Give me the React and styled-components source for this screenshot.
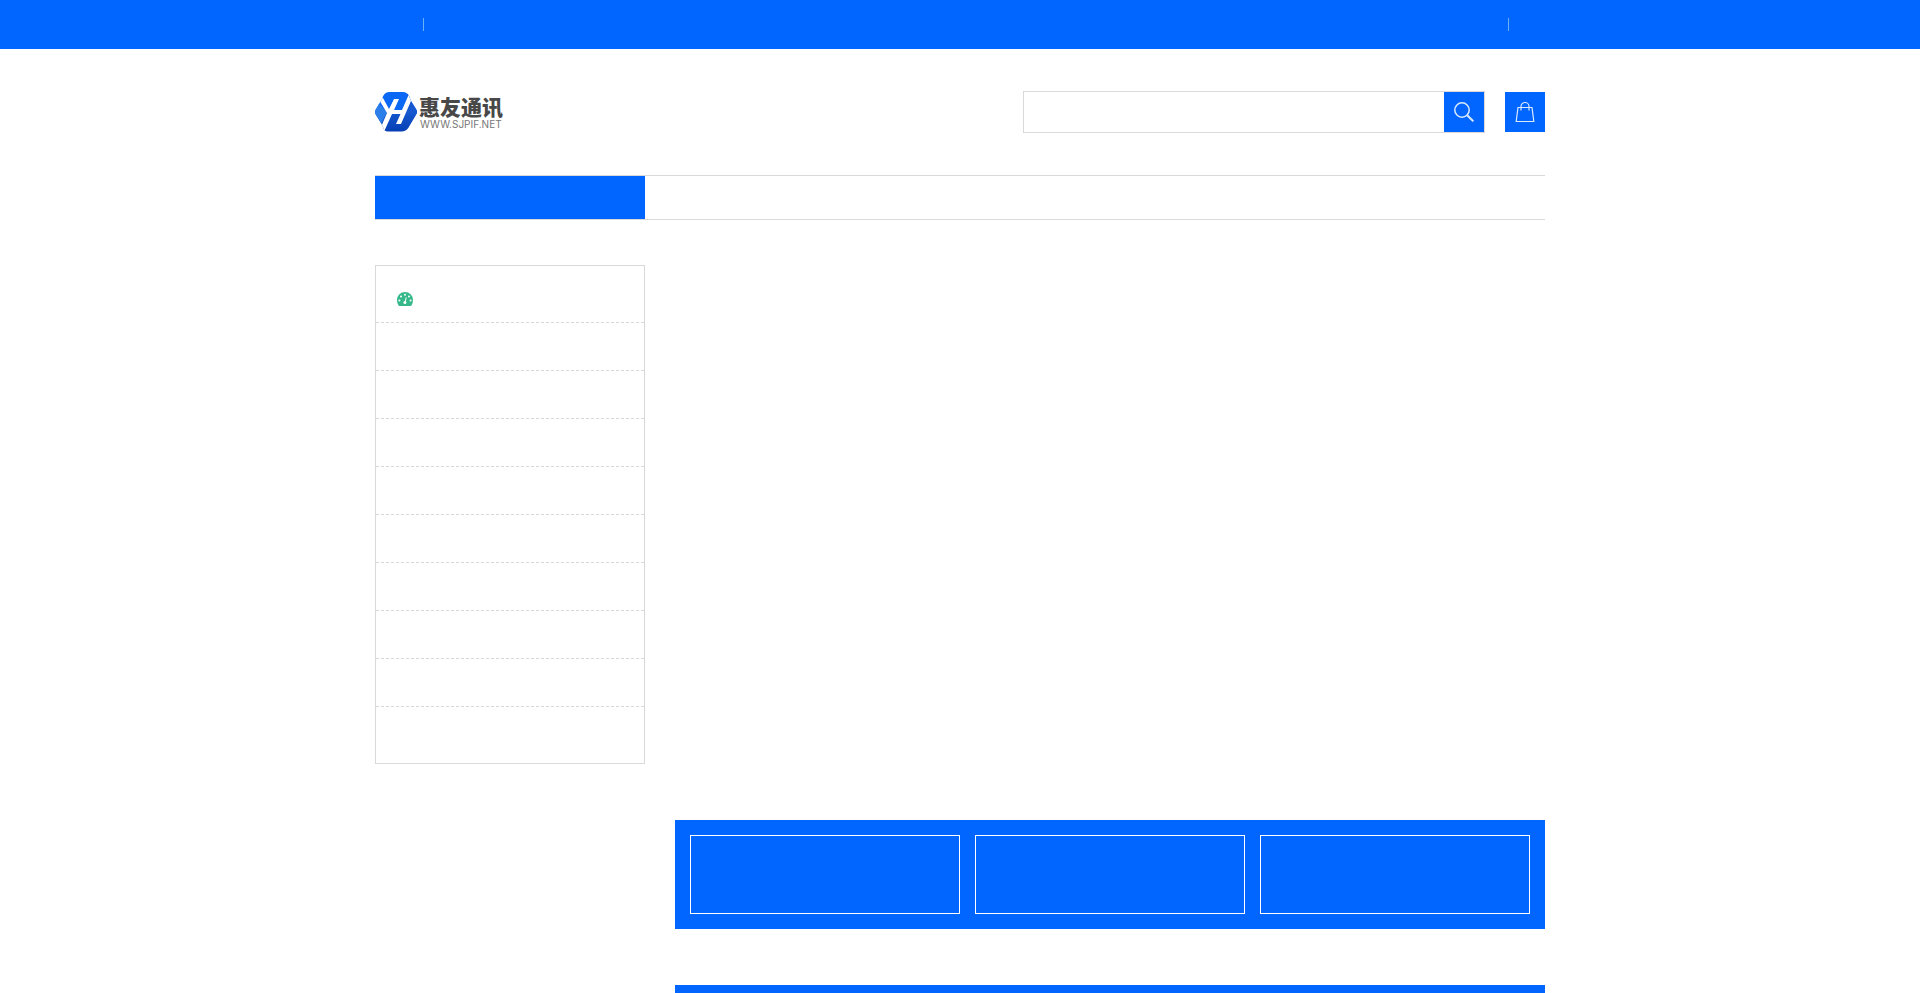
import React from "react";
import styled, { createGlobalStyle } from "styled-components";

const blue = "#0066ff";
const line = "#d9d9d9";

const GlobalStyle = createGlobalStyle`
  * { box-sizing: border-box; }
  body {
    margin: 0;
    background: #fff;
    font-family: "Liberation Sans", "Noto Sans CJK SC", sans-serif;
  }
`;

const Page = styled.div`
  min-height: 100vh;
`;

const Container = styled.div`
  width: 100%;
  max-width: 1170px;
  margin: 0 auto;
`;

const TopBar = styled.div`
  background: ${blue};
  padding: 18px 0;
`;

const TopBarInner = styled(Container)`
  display: flex;
  justify-content: space-between;
  padding: 0 36px 0 48px;
`;

const Separator = styled.span`
  width: 1px;
  height: 13px;
  background: #66b2f4;
`;

const Header = styled(Container)`
  display: flex;
  align-items: center;
  justify-content: space-between;
  padding: 42px 0;
`;

const Logo = styled.a`
  display: flex;
  align-items: flex-start;
  gap: 2px;
  color: #484848;
  text-decoration: none;
`;

const LogoText = styled.span`
  display: flex;
  flex-direction: column;
  padding-top: 2px;
`;

const LogoName = styled.span`
  font: 900 21px/24px "Noto Sans CJK SC", sans-serif;
`;

const LogoSite = styled.span`
  padding-left: 1px;
  font: 10px/12px Inter, sans-serif;
  color: #777;
`;

const Tools = styled.div`
  display: flex;
  align-items: center;
  gap: 20px;
`;

const SearchForm = styled.form`
  display: flex;
  width: 462px;
  height: 42px;
  border: 1px solid ${line};
`;

const SearchInput = styled.input`
  flex: 1;
  min-width: 0;
  border: 0;
  padding: 0 12px;
  font-size: 14px;
  background: transparent;
  outline: none;
`;

const IconButton = styled.button`
  display: flex;
  align-items: center;
  justify-content: center;
  width: 40px;
  height: 40px;
  padding: 0;
  border: 0;
  color: #d9eaff;
  background: ${blue};
  cursor: pointer;
`;

const Nav = styled(Container)`
  border: solid ${line};
  border-width: 1px 0;
`;

const CategoryButton = styled.button`
  display: block;
  width: 270px;
  height: 43px;
  border: 0;
  background: ${blue};
`;

const Main = styled(Container)`
  display: flex;
  align-items: flex-start;
  gap: 30px;
  padding-top: 45px;
`;

const Sidebar = styled.ul`
  flex: none;
  width: 270px;
  margin: 0;
  padding: 9px 0;
  border: 1px solid ${line};
  list-style: none;
`;

const SidebarItem = styled.li`
  display: flex;
  align-items: center;
  height: 48px;
  padding: 0 21px;
  border-bottom: 1px dashed ${line};
  color: #36b88b;

  &:last-child {
    height: 47px;
    border-bottom: 0;
  }
`;

const Content = styled.div`
  flex: 1;
  min-width: 0;
`;

const Slider = styled.section`
  height: 499px;
`;

const Banner = styled.section`
  display: grid;
  grid-template-columns: repeat(3, 1fr);
  gap: 15px;
  margin-top: 56px;
  padding: 15px;
  background: ${blue};
`;

const BannerCard = styled.div`
  height: 79px;
  border: 1px solid #fff;
`;

const LogoMark = () => (
  <svg width="42" height="40" viewBox="0 0 42 40" aria-hidden="true">
    <defs>
      <clipPath id="mark-shape">
        <path d="M14 0H28Q32 0 34 4L36 9L41 17Q43 20 41 23L35 33Q32 39.500 27 39.500H13Q9 39.500 8 35L6 31L1 23Q-1 20 1 17L7 7Q9 0 14 0Z" />
      </clipPath>
      <linearGradient id="mark-low" x1="0" y1="0" x2="0" y2="1">
        <stop offset="0" stopColor="#1558cf" />
        <stop offset="1" stopColor="#063eb4" />
      </linearGradient>
    </defs>
    <g clipPath="url(#mark-shape)">
      <rect width="42" height="20" fill="#0a68f5" />
      <rect y="20" width="42" height="20" fill="url(#mark-low)" />
      <path d="M0 8L12 20L5 34L0 34Z" fill="#2c7fe8" />
      <path d="M33 0L42 0V22L30 22Z" fill="#1558cf" />
      <path d="M3 6L8 6L14 17L19 7H24L19 18H27L34 2H39L26 32H21L25.500 22H17L8 42H3L12 21Z" fill="#fff" />
    </g>
  </svg>
);

const SearchIcon = () => (
  <svg width="20" height="20" viewBox="0 0 20 20" fill="none" stroke="currentColor" aria-hidden="true">
    <circle cx="8" cy="8" r="7.2" strokeWidth="1.5" />
    <path d="M13.2 13.2L19.3 19.3" strokeWidth="2" />
  </svg>
);

const BagIcon = () => (
  <svg width="20" height="22" viewBox="0 0 20 22" fill="none" stroke="currentColor" strokeWidth="1.2" aria-hidden="true">
    <path d="M3 6.5H17L18.8 20.5H1.2Z" />
    <path d="M6 9.5V5.5A4 4 0 0 1 14 5.5V9.5" />
  </svg>
);

const DashboardIcon = () => (
  <svg width="16" height="14" viewBox="0 0 16 14" aria-hidden="true">
    <path d="M8 0A8 8 0 0 1 16 8Q16 10.800 14.700 13Q14.200 14 13.500 14H2.500Q1.800 14 1.300 13Q0 10.800 0 8A8 8 0 0 1 8 0Z" fill="currentColor" />
    <g fill="#fff">
      <circle cx="2.400" cy="8.500" r="1" />
      <circle cx="4" cy="4.500" r="1" />
      <circle cx="8" cy="2.800" r="1" />
      <circle cx="12" cy="4.500" r="1" />
      <circle cx="13.600" cy="8.500" r="1" />
      <circle cx="7.900" cy="10.500" r="1.500" />
      <path d="M8.800 5.300L9.700 5.500L8.600 10.500H7.500Z" />
    </g>
  </svg>
);

export default function App() {
  return (
    <Page>
      <GlobalStyle />
      <TopBar>
        <TopBarInner>
          <Separator />
          <Separator />
        </TopBarInner>
      </TopBar>
      <Header as="header">
        <Logo href="#">
          <LogoMark />
          <LogoText>
            <LogoName>惠友通讯</LogoName>
            <LogoSite>WWW.SJPIF.NET</LogoSite>
          </LogoText>
        </Logo>
        <Tools>
          <SearchForm role="search">
            <SearchInput type="text" aria-label="搜索" />
            <IconButton type="button" aria-label="搜索">
              <SearchIcon />
            </IconButton>
          </SearchForm>
          <IconButton type="button" aria-label="购物车">
            <BagIcon />
          </IconButton>
        </Tools>
      </Header>
      <Nav as="nav">
        <CategoryButton type="button" aria-label="全部分类" />
      </Nav>
      <Main as="main">
        <Sidebar>
          {Array.from({ length: 10 }, (_, i) => (
            <SidebarItem key={i}>{i === 0 && <DashboardIcon />}</SidebarItem>
          ))}
        </Sidebar>
        <Content>
          <Slider />
          {[0, 1].map((row) => (
            <Banner key={row}>
              <BannerCard />
              <BannerCard />
              <BannerCard />
            </Banner>
          ))}
        </Content>
      </Main>
    </Page>
  );
}
